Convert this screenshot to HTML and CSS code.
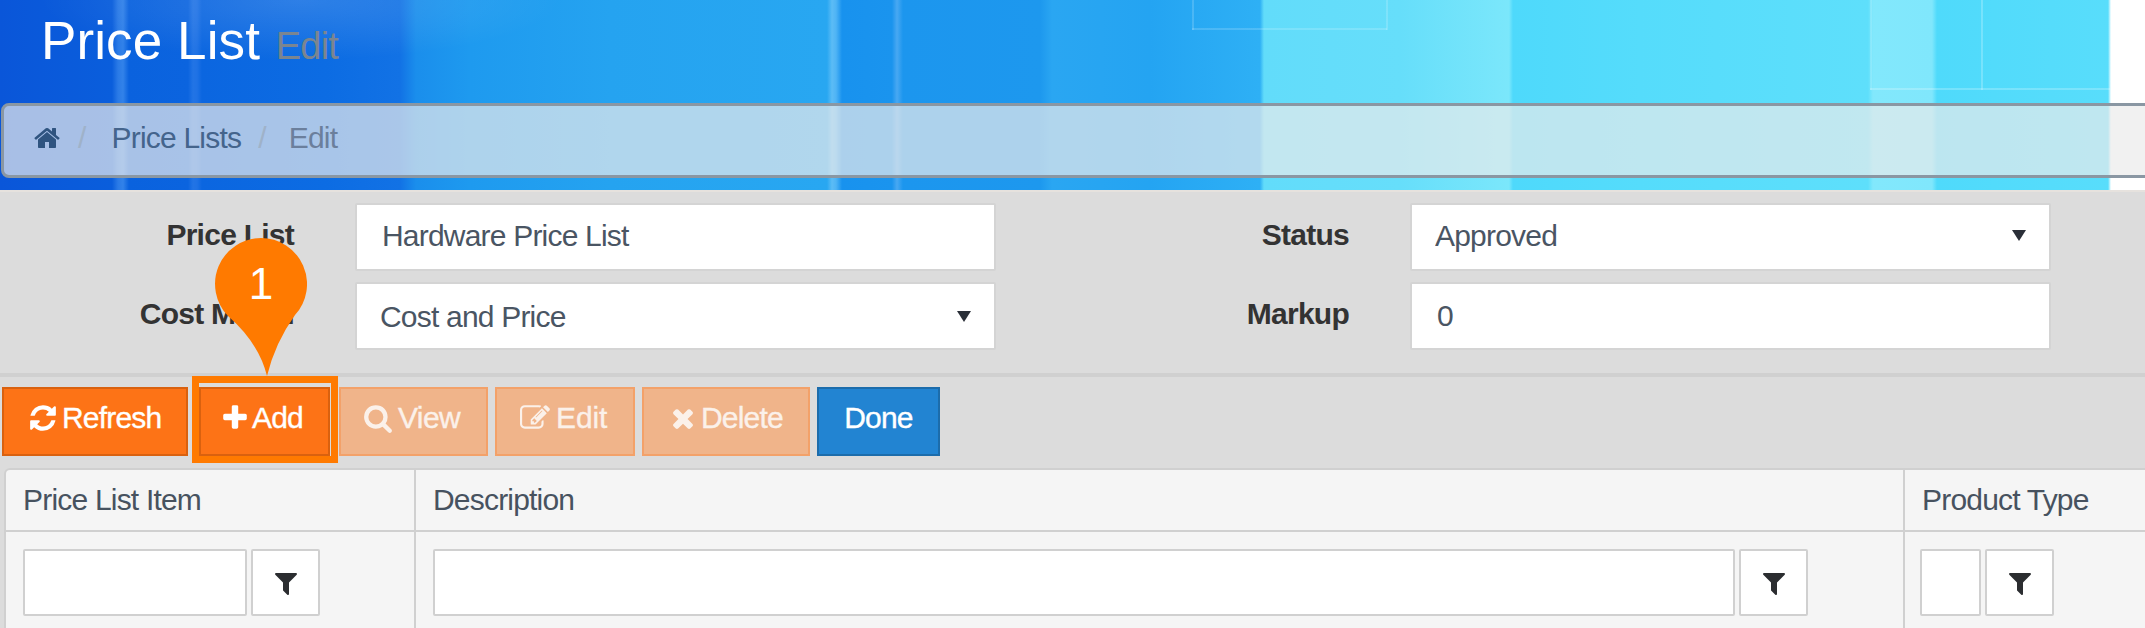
FILE: index.html
```html
<!DOCTYPE html>
<html lang="en">
<head>
<meta charset="utf-8">
<title>Price List</title>
<link rel="stylesheet" href="styles.css">
</head>
<body>
<svg class="defs" aria-hidden="true">
  <symbol id="i-home" viewBox="0 0 1792 1792"><path d="M1472 992v480q0 26-19 45t-45 19h-384v-384h-256v384h-384q-26 0-45-19t-19-45v-480q0-1 .5-3t.5-3l575-474 575 474q1 2 1 6zm223-69l-62 74q-8 9-21 11h-3q-13 0-21-7l-692-577-692 577q-12 8-24 7-13-2-21-11l-62-74q-8-10-7-23.500t11-21.500l719-599q32-26 76-26t76 26l244 204v-195q0-14 9-23t23-9h192q14 0 23 9t9 23v408l219 182q10 8 11 21.500t-7 23.500z"/></symbol>
  <symbol id="i-refresh" viewBox="0 0 1792 1792"><path d="M1639 1056q0 5-1 7-64 268-268 434.500t-478 166.500q-146 0-282.500-55t-243.500-157l-129 129q-19 19-45 19t-45-19-19-45v-448q0-26 19-45t45-19h448q26 0 45 19t19 45-19 45l-137 137q71 66 161 102t187 36q134 0 250-65t186-179q11-17 53-117 8-23 30-23h192q13 0 22.500 9.500t9.500 22.500zm25-800v448q0 26-19 45t-45 19h-448q-26 0-45-19t-19-45 19-45l138-138q-148-137-349-137-134 0-250 65t-186 179q-11 17-53 117-8 23-30 23h-199q-13 0-22.500-9.500t-9.500-22.500v-7q65-268 270-434.500t480-166.500q146 0 284 55.500t245 156.500l130-129q19-19 45-19t45 19 19 45z"/></symbol>
  <symbol id="i-plus" viewBox="0 0 1792 1792"><path d="M1600 736v192q0 40-28 68t-68 28h-416v416q0 40-28 68t-68 28h-192q-40 0-68-28t-28-68v-416h-416q-40 0-68-28t-28-68v-192q0-40 28-68t68-28h416v-416q0-40 28-68t68-28h192q40 0 68 28t28 68v416h416q40 0 68 28t28 68z"/></symbol>
  <symbol id="i-search" viewBox="0 0 1792 1792"><path d="M1216 832q0-185-131.500-316.500t-316.500-131.500-316.500 131.500-131.500 316.500 131.500 316.500 316.500 131.500 316.500-131.500 131.500-316.500zm512 832q0 52-38 90t-90 38q-54 0-90-38l-343-342q-179 124-399 124-143 0-273.500-55.500t-225-150-150-225-55.500-273.500 55.500-273.500 150-225 225-150 273.500-55.500 273.500 55.500 225 150 150 225 55.500 273.500q0 220-124 399l343 343q37 37 37 90z"/></symbol>
  <symbol id="i-edit" viewBox="0 0 1792 1792"><path d="M888 1184l116-116-152-152-116 116v56h96v96h56zm440-720q-16-16-33 1l-350 350q-17 17-1 33t33-1l350-350q17-17 1-33zm80 594v190q0 119-84.500 203.500t-203.500 84.500h-832q-119 0-203.500-84.500t-84.500-203.500v-832q0-119 84.500-203.500t203.500-84.500h832q63 0 117 25 15 7 18 23 3 17-9 29l-49 49q-14 14-32 8-23-6-45-6h-832q-66 0-113 47t-47 113v832q0 66 47 113t113 47h832q66 0 113-47t47-113v-126q0-13 9-22l64-64q15-15 35-7t20 29zm-96-738l288 288-672 672h-288v-288zm444 132l-92 92-288-288 92-92q28-28 68-28t68 28l152 152q28 28 28 68t-28 68z"/></symbol>
  <symbol id="i-times" viewBox="0 0 1792 1792"><path d="M1490 1322q0 40-28 68l-136 136q-28 28-68 28t-68-28l-294-294-294 294q-28 28-68 28t-68-28l-136-136q-28-28-28-68t28-68l294-294-294-294q-28-28-28-68t28-68l136-136q28-28 68-28t68 28l294 294 294-294q28-28 68-28t68 28l136 136q28 28 28 68t-28 68l-294 294 294 294q28 28 28 68z"/></symbol>
  <symbol id="i-filter" viewBox="0 0 1792 1792"><path d="M1595 295q17 41-14 70l-493 493v742q0 42-39 59-13 5-25 5-27 0-45-19l-256-256q-19-19-19-45v-486l-493-493q-31-29-14-70 17-39 59-39h1280q42 0 59 39z"/></symbol>
</svg>

<div class="page">
  <header class="banner">
    <h1 class="title">Price List <small class="title-sub">Edit</small></h1>
    <nav class="crumbs">
      <svg class="crumb-home"><use href="#i-home"/></svg>
      <span class="crumb-sep">/</span>
      <a class="crumb-link">Price Lists</a>
      <span class="crumb-sep crumb-sep-2">/</span>
      <span class="crumb-current">Edit</span>
    </nav>
  </header>

  <main class="content">
    <form class="form-grid">
      <label class="form-label">Price List</label>
      <input class="field field-top" type="text" value="Hardware Price List">
      <label class="form-label">Status</label>
      <div class="select-wrap select-top"><select class="field field-select field-top"><option>Approved</option></select></div>
      <label class="form-label">Cost Model</label>
      <div class="select-wrap"><select class="field field-select"><option>Cost and Price</option></select></div>
      <label class="form-label">Markup</label>
      <input class="field" type="text" value="0">
    </form>

    <div class="toolbar">
      <button class="btn btn-orange btn-refresh" type="button"><svg class="btn-icon"><use href="#i-refresh"/></svg>Refresh</button>
      <button class="btn btn-orange btn-add" type="button"><svg class="btn-icon"><use href="#i-plus"/></svg>Add</button>
      <button class="btn btn-muted btn-view" type="button"><svg class="btn-icon"><use href="#i-search"/></svg>View</button>
      <button class="btn btn-muted btn-edit" type="button"><svg class="btn-icon"><use href="#i-edit"/></svg>Edit</button>
      <button class="btn btn-muted btn-delete" type="button"><svg class="btn-icon"><use href="#i-times"/></svg>Delete</button>
      <button class="btn btn-blue btn-done" type="button">Done</button>
    </div>

    <div class="grid-table">
      <div class="head-cell">Price List Item</div>
      <div class="head-cell">Description</div>
      <div class="head-cell head-last">Product Type</div>
      <div class="filter-cell">
        <input class="filter-input filter-item" type="text">
        <button class="filter-btn" type="button"><svg class="filter-icon"><use href="#i-filter"/></svg></button>
      </div>
      <div class="filter-cell">
        <input class="filter-input filter-desc" type="text">
        <button class="filter-btn" type="button"><svg class="filter-icon"><use href="#i-filter"/></svg></button>
      </div>
      <div class="filter-cell filter-last">
        <input class="filter-input filter-type" type="text">
        <button class="filter-btn" type="button"><svg class="filter-icon"><use href="#i-filter"/></svg></button>
      </div>
    </div>
  </main>

  <div class="callout-frame"></div>
  <div class="callout-pin">
    <svg class="pin-shape" viewBox="0 0 92 138"><path d="M46 0A46 46 0 0 1 80 77Q60 105 52 138Q44 105 13 78A46 46 0 0 1 46 0Z"/></svg>
    <span class="pin-num">1</span>
  </div>
</div>
</body>
</html>
```

FILE: styles.css
```css
* { box-sizing: border-box; }

html, body {
  margin: 0;
  padding: 0;
  height: 628px;
  overflow: hidden;
  background: #dcdcdc;
}

body {
  font-family: "Liberation Sans", Arial, sans-serif;
  font-size: 30px;
  letter-spacing: -.8px;
  color: #333;
}

.defs { display: none; }

.page {
  position: relative;
  height: 628px;
  overflow: hidden;
}

/* Banner */
.banner {
  height: 192px;
  padding-top: 103px;
  position: relative;
  border-bottom: 2px solid #e6e2de;
  background-color: #fff;
  background-image:
    linear-gradient(rgba(255,255,255,.16), rgba(255,255,255,.16)),
    linear-gradient(rgba(255,255,255,.16), rgba(255,255,255,.16)),
    linear-gradient(rgba(255,255,255,.16), rgba(255,255,255,.16)),
    linear-gradient(rgba(255,255,255,.16), rgba(255,255,255,.16)),
    linear-gradient(rgba(255,255,255,.22), rgba(255,255,255,.22)),
    linear-gradient(rgba(255,255,255,.22), rgba(255,255,255,.22)),
    radial-gradient(ellipse 260px 60px at 300px 0, rgba(255,255,255,.14), rgba(255,255,255,0)),
    linear-gradient(90deg,
      #0a56d9 0, #0a5edc 112px, #2a7ae6 118px, #3282e9 123px, #0a62de 129px,
      #0b64df 188px, #2274e5 193px, #1f72e5 197px, #0b66e0 202px,
      #0c6ce3 325px, #1272e5 400px, #1a8eec 416px,
      #1e9aef 470px, #25a3f0 610px, #28a7f1 827px, #5cbcf6 832px, #4fb4f5 836px,
      #1892ee 842px, #1a94ee 892px, #48a8f2 897px, #1c96ee 903px,
      #1d98ee 1040px, #2aa6f2 1052px, #24a4f2 1150px, #2eb0f5 1260px,
      #62dcfa 1264px, #66defa 1400px, #7be7fb 1509px,
      #4ed9fb 1513px, #55dcfb 1640px, #5edffb 1868px,
      #82e8fc 1873px, #80e7fc 1932px, #4fdafb 1937px, #58ddfb 2108px,
      #fff 2111px);
  background-repeat: no-repeat;
  background-size:
    2px 30px, 195px 2px, 2px 30px, 2px 90px, 240px 2px, 2px 90px,
    100% 100%, 100% 100%;
  background-position:
    1192px 0, 1192px 28px, 1386px 0, 1870px 0, 1870px 88px, 1981px 0,
    0 0, 0 0;
}

.title {
  position: absolute;
  left: 41px;
  top: 9px;
  margin: 0;
  font-size: 53px;
  line-height: 64px;
  font-weight: 400;
  letter-spacing: .1px;
  color: #fff;
  white-space: nowrap;
}

.title-sub {
  font-size: 38px;
  color: #7b8590;
  letter-spacing: -.8px;
  margin-left: 1px;
}

.crumbs {
  height: 75px;
  margin-left: 1px;
  margin-right: -10px;
  display: flex;
  align-items: center;
  padding: 0 0 6px 29px;
  background: rgba(235, 235, 235, .7);
  border: 3px solid #8a97a3;
  border-radius: 8px;
}

.crumb-home {
  width: 28px;
  height: 28px;
  fill: #2f5480;
}

.crumb-sep {
  color: #9fb2c9;
  margin: 0 26px 0 17px;
}

.crumb-sep-2 { margin: 0 23px 0 17px; }

.crumb-link { color: #44648c; }

.crumb-current { color: #6b7f9c; }

/* Form */
.content { background: #dcdcdc; }

.form-grid {
  display: grid;
  grid-template-columns: 292px 641px 288px 641px;
  grid-template-rows: 68px 68px;
  column-gap: 63px;
  row-gap: 11px;
  padding-top: 11px;
  height: 185px;
  border-bottom: 4px solid;
  border-image: linear-gradient(#e4e4e4 50%, #d0d0d0 50%) 1;
  align-items: center;
}

.form-label {
  text-align: right;
  font-weight: 700;
  color: #333;
  margin-right: -2px;
  padding-bottom: 4px;
  letter-spacing: -.75px;
  white-space: nowrap;
}

.field {
  display: block;
  width: 100%;
  height: 68px;
  padding: 0 24px 0 25px;
  font: inherit;
  letter-spacing: inherit;
  color: #4a5563;
  background: #fff;
  border: 2px solid #d4d4d4;
  border-radius: 2px;
  outline: none;
}

.field-top { padding-bottom: 3px; }

.select-wrap { position: relative; }

.select-wrap::after {
  content: "";
  position: absolute;
  right: 25px;
  top: 29px;
  border-left: 7px solid transparent;
  border-right: 7px solid transparent;
  border-top: 11px solid #2a2f38;
}

.select-top::after { top: 27px; }

.field-select {
  appearance: none;
  -webkit-appearance: none;
  padding-left: 23px;
}

/* Toolbar */
.toolbar {
  display: flex;
  height: 91px;
  gap: 7px;
  padding: 10px 0 0 2px;
}

.btn {
  display: flex;
  align-items: center;
  height: 69px;
  padding: 0 0 7px;
  font: inherit;
  letter-spacing: inherit;
  color: #fff;
  border: 2px solid;
  border-radius: 0;
  white-space: nowrap;
  -webkit-text-stroke: .35px currentColor;
}

.btn-icon {
  fill: currentColor;
  width: 30px;
  height: 30px;
  flex: none;
}

.btn-orange { background: #fd7316; border-color: #d9610f; }
.btn-muted { background: #f0b48a; border-color: #f3a169; color: #fbf1ea; }
.btn-blue { background: #2284d2; border-color: #1c6cab; }

.btn-refresh { width: 186px; padding-left: 24px; gap: 4px; }
.btn-add { width: 131px; margin: 0 2px 0 4px; padding-left: 19px; gap: 2px; }
.btn-view { width: 149px; padding-left: 22px; gap: 5px; letter-spacing: -.6px; }
.btn-edit { width: 140px; padding-left: 23px; gap: 6px; letter-spacing: -.1px; }
.btn-delete { width: 168px; padding-left: 24px; gap: 3px; }
.btn-done { width: 123px; justify-content: center; }

/* Table */
.grid-table {
  display: grid;
  grid-template-columns: 410px 1489px 1fr;
  grid-template-rows: 62px 120px;
  margin-left: 4px;
  background: #f5f5f5;
  border-left: 2px solid #d0d0d0;
  border-top: 2px solid #d0d0d0;
  border-top-left-radius: 6px;
}

.head-cell {
  display: flex;
  align-items: center;
  padding-left: 17px;
  color: #47525f;
  border-right: 2px solid #d0d0d0;
  border-bottom: 2px solid #d0d0d0;
}

.filter-cell {
  display: flex;
  gap: 4px;
  padding: 17px 0 0 17px;
  border-right: 2px solid #d0d0d0;
}

.head-last { border-right: 0; }

.filter-last { border-right: 0; padding-left: 15px; }

.filter-input {
  height: 67px;
  background: #fff;
  border: 2px solid #d0d0d0;
  border-radius: 2px;
  outline: none;
}

.filter-item { width: 224px; }
.filter-desc { width: 1302px; }
.filter-type { width: 61px; }

.filter-btn {
  display: flex;
  align-items: center;
  justify-content: center;
  width: 69px;
  height: 67px;
  padding: 0;
  background: #fff;
  border: 2px solid #d0d0d0;
  border-radius: 2px;
}

.filter-icon {
  width: 28px;
  height: 28px;
  fill: #2b2d30;
}

/* Callout */
.callout-frame {
  position: absolute;
  left: 192px;
  top: 376px;
  width: 146px;
  height: 87px;
  border: 7px solid #ff7a00;
}

.callout-pin {
  position: absolute;
  left: 215px;
  top: 238px;
  width: 92px;
  height: 138px;
}

.pin-shape {
  display: block;
  width: 92px;
  height: 138px;
  fill: #ff7a00;
}

.pin-num {
  position: absolute;
  left: 0;
  right: 0;
  top: 21px;
  text-align: center;
  font-size: 44px;
  line-height: 50px;
  letter-spacing: 0;
  color: #fff;
}
```
